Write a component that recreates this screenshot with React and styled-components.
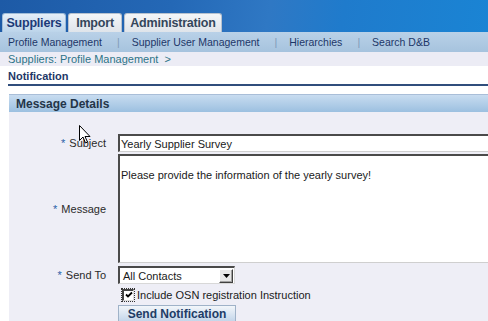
import React from 'react'
import styled, { createGlobalStyle } from 'styled-components'

const GlobalStyle = createGlobalStyle`
  html, body {
    margin: 0;
    padding: 0;
    background: #ffffff;
    font-family: Tahoma, "Liberation Sans", "DejaVu Sans", sans-serif;
  }
`

const Page = styled.div`
  position: relative;
  width: 488px;
  height: 321px;
  overflow: hidden;
  display: flex;
  flex-direction: column;
`

const Header = styled.div`
  height: 32px;
  flex: none;
  display: flex;
  align-items: flex-end;
  gap: 2px;
  padding-left: 2px;
  background: linear-gradient(100deg, #1d5aa6 0%, #2468b6 35%, #2f78c4 55%, #1f7bcc 70%, #1a84d4 100%);
`

const Tab = styled.div`
  width: ${({ w }) => w}px;
  height: 19px;
  box-sizing: border-box;
  display: flex;
  align-items: center;
  justify-content: center;
  border-radius: 3px 3px 0 0;
  font-size: 12.5px;
  font-weight: bold;
  letter-spacing: -0.2px;
  color: ${({ active }) => (active ? '#1c3a78' : '#34465a')};
  background: ${({ active }) =>
    active
      ? 'linear-gradient(#e4eef8, #bcd4ea)'
      : 'linear-gradient(#f4f6f8, #dfe4ea)'};
  border: 1px solid ${({ active }) => (active ? '#9fbcd8' : '#b7c2cf')};
  border-bottom: none;
`

const NavBar = styled.div`
  height: 20px;
  flex: none;
  display: flex;
  align-items: center;
  padding-left: 8px;
  background: linear-gradient(#b9d1e8, #a6c3de);
  font-size: 10.5px;
  color: #1d3768;
`

const NavSep = styled.span`
  color: #7f9ab8;
  margin: 0 12px 0 15px;
`

const Crumbs = styled.div`
  height: 14px;
  flex: none;
  display: flex;
  align-items: center;
  padding-left: 8px;
  background: #ececf5;
  font-size: 11px;
  color: #2c7488;
`

const Title = styled.div`
  flex: none;
  margin: 4px 0 0 8px;
  padding-bottom: 2px;
  border-bottom: 2px solid #304e7c;
  font-size: 11px;
  font-weight: bold;
  color: #1e3867;
`

const Panel = styled.div`
  flex: 1;
  margin: 8px 0 0 9px;
  display: flex;
  flex-direction: column;
  background: #eeeef6;
`

const PanelHead = styled.div`
  height: 17px;
  flex: none;
  display: flex;
  align-items: center;
  padding-left: 7px;
  border-top: 1px solid #a9bed8;
  background: linear-gradient(#c8dcf0, #9cc0e0);
  font-size: 12px;
  font-weight: bold;
  color: #243548;
`

const Form = styled.div`
  display: grid;
  grid-template-columns: 109px 1fr;
  row-gap: 2px;
  padding-top: 22px;
  font-size: 11px;
`

const Label = styled.div`
  display: flex;
  align-items: center;
  justify-content: flex-end;
  padding-right: 12px;
  color: #2a2a2a;
`

const Star = styled.span`
  color: #2a5ea8;
  margin-right: 4px;
`

const Field = styled.div`
  display: flex;
  align-items: center;
  margin-top: ${({ shift }) => shift || 0}px;
`

const TextBox = styled.div`
  width: 100%;
  height: ${({ tall }) => (tall ? '109px' : '18px')};
  box-sizing: border-box;
  background: #ffffff;
  border-top: 2px solid #4a4a4a;
  border-left: 2px solid #4a4a4a;
  border-bottom: 1px solid #cfcfcf;
  padding: ${({ tall }) => (tall ? '12px 0 0 1px' : '1px 0 0 1px')};
  color: #1a1a1a;
  font-size: 11px;
  line-height: 14px;
`

const Select = styled.div`
  width: 117px;
  height: 18px;
  box-sizing: border-box;
  display: flex;
  align-items: center;
  justify-content: space-between;
  background: #ffffff;
  border-top: 2px solid #4a4a4a;
  border-left: 2px solid #4a4a4a;
  border-right: 1px solid #d8d8d8;
  border-bottom: 1px solid #d8d8d8;
  padding-left: 3px;
  color: #1a1a1a;
`

const DropBtn = styled.div`
  width: 14px;
  height: 14px;
  margin-right: 1px;
  box-sizing: border-box;
  display: flex;
  align-items: center;
  justify-content: center;
  background: #e6e6e6;
  border: 1px solid;
  border-color: #ffffff #404040 #404040 #ffffff;
  box-shadow: inset -1px -1px 0 #a0a0a0;
`

const CheckRow = styled.div`
  grid-column: 2;
  display: flex;
  align-items: center;
  height: 17px;
  padding-left: 4px;
  color: #1a1a1a;
`

const CheckBox = styled.div`
  width: 12px;
  height: 12px;
  box-sizing: border-box;
  margin-right: 3px;
  display: flex;
  align-items: center;
  justify-content: center;
  background: #ffffff;
  border-top: 2px solid #444;
  border-left: 2px solid #444;
  border-right: 1px solid #ddd;
  border-bottom: 1px solid #ddd;
  outline: 1px dotted #333;
  outline-offset: 0;
`

const Button = styled.div`
  grid-column: 2;
  width: 118px;
  height: 17px;
  box-sizing: border-box;
  display: flex;
  align-items: center;
  justify-content: center;
  border: 1px solid #9fb2c8;
  background: linear-gradient(#f2f6fa, #c4d6ea);
  font-size: 12px;
  font-weight: bold;
  color: #213c66;
`

const Cursor = styled.svg`
  position: absolute;
  left: 79px;
  top: 125px;
`

const navItems = ['Profile Management', 'Supplier User Management', 'Hierarchies', 'Search D&B']

export default function App() {
  return (
    <Page>
      <GlobalStyle />
      <Header>
        <Tab active w={64}>Suppliers</Tab>
        <Tab w={54}>Import</Tab>
        <Tab w={98}>Administration</Tab>
      </Header>
      <NavBar>
        {navItems.map((item, i) => (
          <React.Fragment key={item}>
            {i > 0 && <NavSep>|</NavSep>}
            <span>{item}</span>
          </React.Fragment>
        ))}
      </NavBar>
      <Crumbs>Suppliers: Profile Management&nbsp;&nbsp;&gt;</Crumbs>
      <Title>Notification</Title>
      <Panel>
        <PanelHead>Message Details</PanelHead>
        <Form>
          <Label><Star>*</Star>Subject</Label>
          <Field>
            <TextBox>Yearly Supplier Survey</TextBox>
          </Field>
          <Label><Star>*</Star>Message</Label>
          <Field>
            <TextBox tall>Please provide the information of the yearly survey!</TextBox>
          </Field>
          <Label><Star>*</Star>Send To</Label>
          <Field shift={1}>
            <Select>
              All Contacts
              <DropBtn>
                <svg width="7" height="4" viewBox="0 0 7 4">
                  <path d="M0 0h7L3.5 4z" fill="#000" />
                </svg>
              </DropBtn>
            </Select>
          </Field>
          <CheckRow>
            <CheckBox>
              <svg width="8" height="8" viewBox="0 0 8 8">
                <path d="M1 3.5l2 2L7 1.5" stroke="#000" strokeWidth="1.8" fill="none" />
              </svg>
            </CheckBox>
            Include OSN registration Instruction
          </CheckRow>
          <Button>Send Notification</Button>
        </Form>
      </Panel>
      <Cursor width="12" height="20" viewBox="0 0 12 20">
        <path d="M0.5 0.5v15l3.5-3.5 2.5 6 2-1-2.5-5.5h5z" fill="#fff" stroke="#000" strokeWidth="1" />
      </Cursor>
    </Page>
  )
}
